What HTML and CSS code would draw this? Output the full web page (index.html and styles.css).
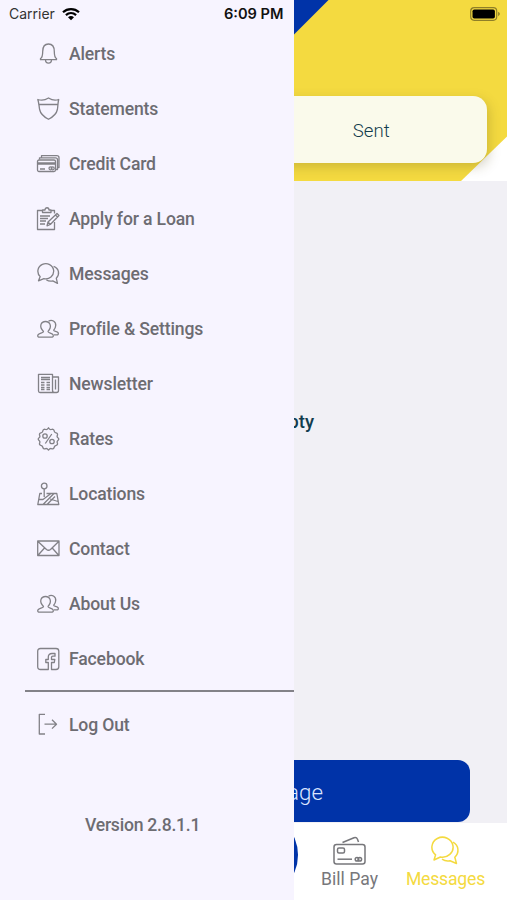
FILE: index.html
```html
<!DOCTYPE html>
<html lang="en">
<head>
    <meta charset="UTF-8">
    <meta name="viewport" content="width=device-width, initial-scale=1.0">
    <title>Messages</title>
    <link rel="stylesheet" href="styles.css">
</head>
<body>
    <div class="app">
        <div class="page">
            <header class="header">
                <svg class="header-bg" viewBox="0 0 507 181" preserveAspectRatio="none">
                    <rect width="507" height="181" fill="#f4da40"/>
                    <path d="M0 0H328.500L147.500 181H0z" fill="#0033a8"/>
                    <path d="M507 136.500V181H461z" fill="#fff"/>
                </svg>
                <div class="tabs">
                    <div class="tab">Inbox</div>
                    <div class="tab">Sent</div>
                </div>
            </header>
            <main class="content">
                <p class="empty">Inbox is empty</p>
                <button class="new-message">New Message</button>
            </main>
            <nav class="tab-bar">
                <div class="tab-item"></div>
                <div class="tab-item"></div>
                <div class="tab-item"><span class="circle"></span></div>
                <div class="tab-item">
                    <svg class="tab-icon" viewBox="0 0 34 30">
                        <rect x="1" y="8.500" width="31" height="19.500" rx="2.500"/>
                        <path d="M9.500 6.500 21 1.800q2.500-.8 3.500 1.400l1 2.800"/>
                        <rect x="4.500" y="12" width="7" height="5" rx="1.500"/>
                        <path d="M4.500 23.200H19"/>
                        <circle cx="24" cy="23.200" r="1.800"/>
                        <circle cx="26.800" cy="23.200" r="1.800"/>
                    </svg>
                    <span>Bill Pay</span>
                </div>
                <div class="tab-item active">
                    <svg class="tab-icon" viewBox="0 0 34 30">
                        <path d="M6.600 18.800a10.600 10 0 1 1 4.800 2.200L5 24z"/>
                        <path d="M24 6.200c6 3.300 6.500 10.500 1.800 15l1.700 6.300-6.500-2.800c-3 .7-5.500.1-8-1.500"/>
                    </svg>
                    <span>Messages</span>
                </div>
            </nav>
        </div>

        <aside class="drawer">
            <ul class="menu">
                <li>
                    <svg class="icon" viewBox="0 0 24 24"><path d="M4.500 16.500c2-1 2.200-3 2.200-7C6.700 4.500 9 2 12.500 2s5.800 2.500 5.800 7.500c0 4 .2 6 2.200 7v1.200h-16zM9.500 17.700c0 4.500 6 4.500 6 0"/></svg>
                    <span>Alerts</span>
                </li>
                <li>
                    <svg class="icon" viewBox="0 0 24 24"><path d="M1.800 2.500c3.500 1.200 7.200.8 10.700-1.500 3.500 2.300 7.200 2.700 10.200 1.500-.8 3-.7 6.500-1.300 10-1 5-5 7.700-8.900 9.800-3.900-2.100-7.900-4.800-8.900-9.800-.6-3.500-.7-7-1.800-10zM3 7.500h19"/></svg>
                    <span>Statements</span>
                </li>
                <li>
                    <svg class="icon" viewBox="0 0 24 24">
                        <rect x="1.500" y="8" width="18" height="11.500" rx="1.500"/>
                        <path d="M3.500 7.500V5.800h16q2 0 2 2V17.500h-1.700M5.500 5.500V3.700h15.300q2.200 0 2.200 2V15.500h-1.200M2 11h17M2 12.200h17M4 17h5"/>
                        <circle cx="14.500" cy="16.300" r="1.500"/><circle cx="16.700" cy="16.300" r="1.500"/>
                    </svg>
                    <span>Credit Card</span>
                </li>
                <li>
                    <svg class="icon" viewBox="0 0 24 24">
                        <path d="M6.500 3.500h-5V22.500h17v-7.500M15 3.500h3.500v3M6.500 5.500v-2.500h2.500c0-3 4-3 4 0H15v2.500zM4 9h10M4 11.500h8M4 14h6M4 17h5"/>
                        <path d="M11 18.800l1-3.800 9-8.500 2 2-8.700 9zM12 15l2.300 2.500M19.500 8l2 2"/>
                    </svg>
                    <span>Apply for a Loan</span>
                </li>
                <li>
                    <svg class="icon" viewBox="0 0 24 24"><path d="M4.200 14.600a7.900 7.600 0 1 1 3.700 2L2.500 18.800z"/><path d="M17.600 4.300c5.600 2 6.400 8.200 2.700 12l1.200 5-4.700-2.400c-2.400.5-4.500.2-6.500-1.200"/></svg>
                    <span>Messages</span>
                </li>
                <li>
                    <svg class="icon" viewBox="0 0 24 24"><path d="M7.500 14.500C2.500 9.500 5 4.500 9.500 4.500s7 5 2.500 10c-.3 1.500 4.500 1.800 5.200 3.600.5 1.800-.5 2.100-2.200 2.100H4c-2.200 0-2.700-.9-2-2.300 1-1.700 5.500-1.800 5.500-3.400z"/><path d="M12.500 4.200c3-2 7.800-.2 7.200 4.600-.2 2-1 3.300-2 4.400 0 1.300 3.600 1 4.500 2.700.5 1.500-.3 1.900-1.700 1.900h-2.500"/></svg>
                    <span>Profile &amp; Settings</span>
                </li>
                <li>
                    <svg class="icon" viewBox="0 0 24 24">
                        <path d="M16.500 5V2.300h-14V19q0 1.500 1.500 1.500h16.500q2 0 2-2V5h-6V18q0 2.500 2 2.500M19.500 7.500v10"/>
                        <path d="M5 5.500h9M5 7.500h9M5 10.500h3.500M10.500 10.500H14M5 13h3.500M10.500 13H14M5 15.500h3.500M10.500 15.500H14M5 17.500h3.500M10.500 17.500H14"/>
                    </svg>
                    <span>Newsletter</span>
                </li>
                <li>
                    <svg class="icon" viewBox="0 0 24 24">
                        <path d="M12.500 .8Q14 3 15.300 2.500q2.500-1 3 1.800.3 1.200 1.800 1.500 2 .6 1.200 2.700-.6 1.500.6 2.200 1.800 1.300 0 2.800-1.200 1-.6 2.200.8 2.100-1.200 2.700-1.500.3-1.800 1.600-.5 2.500-3 1.600-1.300-.5-2.800 1.500-1.500-2-2.800-1.500-2.500.9-3-1.600-.3-1.300-1.800-1.600-2-.6-1.200-2.700.6-1.200-.6-2.200-1.800-1.500 0-2.800 1.200-.7.600-2.200-.8-2.100 1.200-2.700 1.500-.3 1.800-1.500.5-2.800 3-1.800Q11 3 12.500.8z"/>
                        <circle cx="9" cy="9" r="2.200"/><circle cx="16" cy="14.500" r="2.200"/><path d="M15.800 7L9.300 16.500"/>
                    </svg>
                    <span>Rates</span>
                </li>
                <li>
                    <svg class="icon" viewBox="0 0 24 24">
                        <circle cx="8.200" cy="4" r="2.800"/>
                        <path d="M8.200 6.800V15M6 11.500H3.800L1.800 22.500h21l-2-11H10.500M3 17.500h4l8-6M7 22.500l11-11M11 22.500l8-8M14 17l8 2.500"/>
                    </svg>
                    <span>Locations</span>
                </li>
                <li>
                    <svg class="icon" viewBox="0 0 24 24"><path d="M1.700 4h21.300v14.500H1.700zM2 4.500l8.500 8q2 1.500 4 0L22.700 4.500M2 18.200l6.500-7.200M22.700 18.200l-6.500-7.200"/></svg>
                    <span>Contact</span>
                </li>
                <li>
                    <svg class="icon" viewBox="0 0 24 24"><path d="M7.500 14.500C2.500 9.500 5 4.500 9.500 4.500s7 5 2.500 10c-.3 1.500 4.500 1.800 5.200 3.600.5 1.800-.5 2.100-2.200 2.100H4c-2.200 0-2.700-.9-2-2.300 1-1.700 5.500-1.800 5.500-3.400z"/><path d="M12.500 4.200c3-2 7.800-.2 7.200 4.600-.2 2-1 3.300-2 4.400 0 1.300 3.600 1 4.500 2.700.5 1.500-.3 1.900-1.700 1.900h-2.500"/></svg>
                    <span>About Us</span>
                </li>
                <li>
                    <svg class="icon" viewBox="0 0 24 24"><path d="M12.300 22.500H4.500q-2.800 0-2.800-2.800V4.300q0-2.800 2.800-2.800h15.500q2.800 0 2.800 2.800v15.400q0 2.800-2.800 2.800h-4.500v-7h2.800l.5-3h-3.300v-2q0-1.300 1.300-1.300h2.200V6.500h-3q-3.700 0-3.700 3.500v2.500H9.800v3h2.500z"/></svg>
                    <span>Facebook</span>
                </li>
            </ul>
            <div class="logout">
                <svg class="icon" viewBox="0 0 24 24"><path d="M9 1.300H3.300V21h5.700M8.500 11.200h12M16 6.800l4.500 4.400-4.500 4.400"/></svg>
                <span>Log Out</span>
            </div>
            <p class="version">Version 2.8.1.1</p>
        </aside>

        <div class="status-bar">
            <span class="carrier">Carrier</span>
            <svg class="wifi" viewBox="0 0 18 14"><path d="M1 5.200c4.500-4.200 11.500-4.200 16 0M3.900 8.100c3-2.700 7.200-2.700 10.200 0"/><path class="wifi-dot" d="M9 13.300l-3-3.100q3-2.300 6 0z"/></svg>
            <span class="time">6:09 PM</span>
            <svg class="battery" viewBox="0 0 31 14"><rect class="battery-case" x=".7" y=".7" width="26" height="12.600" rx="3.500"/><rect x="2.500" y="2.500" width="22.400" height="9" rx="1.800"/><path d="M28.200 4.800q3.200 2.200 0 4.400z" opacity=".45"/></svg>
        </div>
    </div>
</body>
</html>
```
FILE: styles.css
```css
body {
    font-family: Roboto, Arial, sans-serif;
    margin: 0;
    background-color: #f1f0f5;
}
.app {
    position: relative;
    width: 507px;
    height: 900px;
    overflow: hidden;
}
.page {
    display: flex;
    flex-direction: column;
    height: 100%;
}

/* header */
.header {
    position: relative;
    box-sizing: border-box;
    height: 181px;
    padding: 96px 20px 0;
}
.header-bg {
    position: absolute;
    top: 0;
    left: 0;
    width: 100%;
    height: 100%;
}
.tabs {
    position: relative;
    display: flex;
    height: 67px;
    border-radius: 14px;
    background-color: #fafaeb;
    box-shadow: 2px 4px 12px rgba(90, 80, 30, 0.25);
}
.tab {
    flex: 1;
    padding-left: 2px;
    line-height: 70px;
    text-align: center;
    font-size: 18.6px;
    font-weight: 300;
    color: #123c4d;
}

/* message list */
.content {
    display: flex;
    flex: 1;
    flex-direction: column;
    align-items: center;
    justify-content: space-between;
    padding-top: 230px;
}
.empty {
    margin: 0;
    font-size: 18.6px;
    font-weight: 500;
    line-height: 22px;
    color: #123c4d;
}
.new-message {
    width: 433px;
    height: 62px;
    margin-bottom: 1px;
    padding: 1px 0 0;
    border: none;
    border-radius: 12px;
    background-color: #0033a8;
    color: #dbe5ff;
    font-family: inherit;
    font-size: 22.3px;
    font-weight: 300;
}
.tab-bar {
    display: grid;
    grid-template-columns: repeat(5, 96px);
    justify-content: center;
    height: 77px;
    background-color: #fff;
}
.tab-item {
    display: flex;
    flex-direction: column;
    align-items: center;
    padding-top: 13px;
    font-size: 17.6px;
    line-height: 22px;
    color: #77777b;
}
.tab-item.active {
    color: #f4da40;
    letter-spacing: -0.2px;
}
.tab-icon {
    width: 34px;
    height: 30px;
    margin-bottom: 2px;
    fill: none;
    stroke: currentColor;
    stroke-width: 1.5;
    stroke-linejoin: round;
}
.circle {
    width: 88px;
    height: 88px;
    margin-top: -25px;
    flex-shrink: 0;
    border-radius: 50%;
    background-color: #0033a8;
}

/* side menu */
.drawer {
    position: absolute;
    top: 0;
    left: 0;
    box-sizing: border-box;
    width: 294px;
    height: 100%;
    padding: 26px 0 0 25px;
    background-color: #f7f4ff;
    color: #6d6c72;
    font-size: 17.6px;
    font-weight: 500;
    letter-spacing: -0.15px;
}
.menu {
    margin: 0;
    padding: 0 0 4px;
    border-bottom: 2px solid #838288;
    list-style: none;
}
.menu li,
.logout {
    display: flex;
    align-items: center;
    gap: 9px;
    height: 55px;
    padding-left: 11px;
}
.logout {
    margin-top: 5px;
}
.icon {
    width: 24px;
    height: 24px;
    fill: none;
    stroke: #828187;
    stroke-width: 1.3;
    stroke-linejoin: round;
}
.version {
    margin: 62px 0 0 60px;
    line-height: 22px;
    letter-spacing: -0.25px;
}

/* status bar */
.status-bar {
    position: absolute;
    top: 0;
    left: 0;
    display: flex;
    align-items: center;
    box-sizing: border-box;
    width: 100%;
    height: 27px;
    padding: 0 6px 0 9px;
    font-family: Inter, Arial, sans-serif;
    font-size: 14px;
    color: #111;
}
.carrier {
    color: #333;
}
.wifi {
    width: 18px;
    height: 14px;
    margin-left: 7px;
    fill: none;
    stroke: #000;
    stroke-width: 2.2;
}
.wifi-dot {
    fill: #000;
    stroke: none;
}
.time {
    margin-left: 144px;
    font-size: 14.6px;
    font-weight: 600;
}
.battery {
    width: 31px;
    height: 14px;
    margin-left: auto;
}
.battery-case {
    fill: none;
    stroke: #8f7f28;
    stroke-width: 1.2;
}
```
